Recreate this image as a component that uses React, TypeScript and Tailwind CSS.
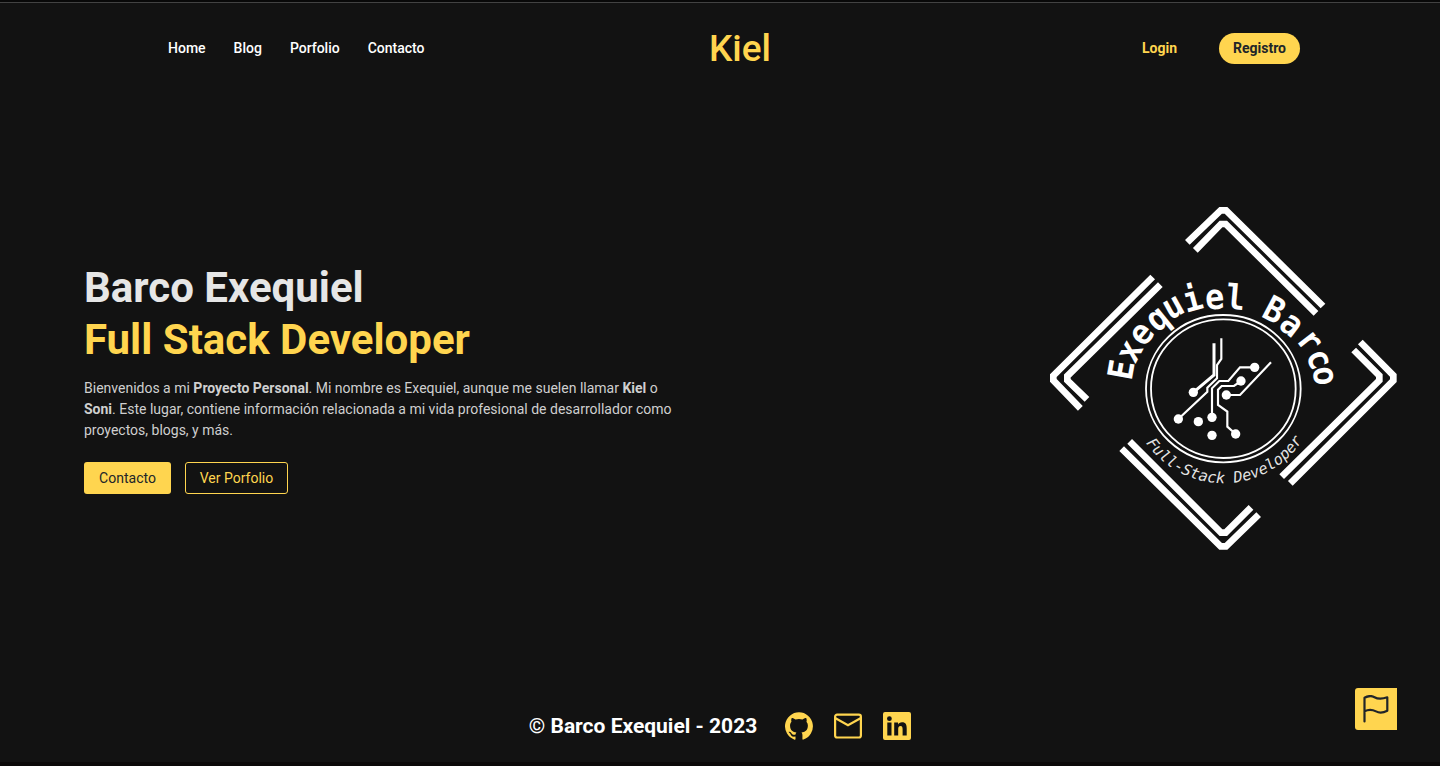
const navLinks = ["Home", "Blog", "Porfolio", "Contacto"];

const arcLetters: [string, number, number, number][] = [
  ["E", 242, 524, -80],
  ["x", 273, 470, -62],
  ["e", 307, 418, -50],
  ["q", 355, 374, -39],
  ["u", 401, 337, -29],
  ["i", 457, 309, -15],
  ["e", 524, 313, -5],
  ["l", 587, 305, 5],
  ["B", 704, 343, 28],
  ["a", 752, 391, 38],
  ["r", 806, 440, 52],
  ["c", 834, 494, 67],
  ["o", 850, 543, 82],
];

const nodes: [number, number][] = [
  [460, 592],
  [415, 672],
  [516, 667],
  [644, 517],
  [603, 558],
  [587, 717],
  [559, 600],
  [475, 680],
  [516, 721],
];

function Emblem() {
  return (
    <svg viewBox="30 30 1041 1041" className="size-[347px] shrink-0" fill="none" stroke="#fff">
      <g strokeWidth="20">
        <path d="M442 142 542 46H558L849 333M466 166 543 87H557L828 355" />
        <path d="M338 246 40 542V556L121 640M361 269 82 543V556L141 613" />
        <path d="M961 441 1060 541V557L751 865M941 465 1018 542V556L725 845" />
        <path d="M245 761 542 1054H558L656 959M269 739 543 1013H557L633 937" />
      </g>
      <g strokeWidth="5.5">
        <ellipse cx="550" cy="581" rx="232" ry="221" />
        <ellipse cx="550" cy="581" rx="217" ry="208" />
      </g>
      <g strokeWidth="6.5">
        <path strokeWidth="9" d="M522 445V540L460 592" />
        <path d="M544 430V492L531 510V550L502 578V590L415 672" />
        <path d="M516 667V580L538 558H565L600 517H644" />
        <path d="M603 558 582 573H545L534 584V630L562 650V695L587 717" />
        <path d="M559 600H600L693 502" />
      </g>
      <g fill="#fff" stroke="none">
        {nodes.map(([x, y]) => (
          <circle key={`${x}-${y}`} cx={x} cy={y} r="14" />
        ))}
        <g className="font-['DejaVu_Sans_Mono',monospace] text-[104px] font-bold" textAnchor="middle">
          {arcLetters.map(([c, x, y, r], i) => (
            <text key={i} transform={`translate(${x} ${y}) rotate(${r}) scale(0.92 1)`} y={/[EBli]/.test(c) ? 38 : 29}>
              {c}
            </text>
          ))}
        </g>
        <path id="tagline" d="M318 744A283 283 0 0 0 806 702" fill="none" />
        <text className="font-['DejaVu_Sans_Mono',monospace] text-[46px] italic" fillOpacity="0.9">
          <textPath href="#tagline">Full-Stack Developer</textPath>
        </text>
      </g>
    </svg>
  );
}

function GithubIcon() {
  return (
    <svg viewBox="0 0 24 24" className="size-7" fill="currentColor">
      <path d="M12 .3a12 12 0 0 0-3.8 23.38c.6.12.83-.26.83-.57L9 21.07c-3.34.72-4.04-1.61-4.04-1.61-.55-1.39-1.34-1.76-1.34-1.76-1.08-.74.09-.73.09-.73 1.2.09 1.83 1.24 1.83 1.24 1.08 1.83 2.81 1.3 3.5 1 .1-.78.42-1.31.76-1.61-2.67-.3-5.47-1.33-5.47-5.93 0-1.31.47-2.38 1.24-3.22-.14-.3-.54-1.52.1-3.18 0 0 1-.32 3.3 1.23a11.5 11.5 0 0 1 6 0c2.28-1.55 3.29-1.23 3.29-1.23.64 1.66.24 2.88.12 3.18a4.65 4.65 0 0 1 1.23 3.22c0 4.61-2.8 5.63-5.48 5.92.42.36.81 1.1.81 2.22l-.01 3.29c0 .31.2.69.82.57A12 12 0 0 0 12 .3" />
    </svg>
  );
}

function MailIcon() {
  return (
    <svg viewBox="0 0 28 28" className="size-7" fill="none" stroke="currentColor" strokeWidth="2.2">
      <rect x="1.1" y="2.7" width="25.8" height="22.8" rx="2" />
      <path d="M1.5 6.3 14 13.3 26.5 6.3" />
    </svg>
  );
}

function LinkedinIcon() {
  return (
    <svg viewBox="0 0 28 28" className="size-7" fill="currentColor">
      <path
        fillRule="evenodd"
        d="M2 0H26A2 2 0 0 1 28 2V26A2 2 0 0 1 26 28H2A2 2 0 0 1 0 26V2A2 2 0 0 1 2 0ZM4.3 10.6V23.4H8.5V10.6ZM6.4 4.3A2.4 2.4 0 1 0 6.4 9.1 2.4 2.4 0 1 0 6.4 4.3ZM11.2 10.6V23.4H15.2V17.1C15.2 15.4 15.6 13.9 17.5 13.9S19.6 15.7 19.6 17.2V23.4H23.7V16.4C23.7 13 23 10.3 19 10.3 17 10.3 15.7 11.3 15.1 12.4H15V10.6Z"
      />
    </svg>
  );
}

function FlagIcon() {
  return (
    <svg viewBox="0 0 28 28" className="size-7" fill="none" stroke="currentColor" strokeWidth="2.2" strokeLinecap="round" strokeLinejoin="round">
      <path d="M2.5 26.5V2.8C6 .8 9.3.3 12.5 2.2S20 4.2 25.3 2.3V15.7C21 18 17.5 18.3 14 16.4S7 14 2.5 16.2" />
    </svg>
  );
}

export default function App() {
  return (
    <div className="flex h-[766px] flex-col overflow-hidden border-t-2 border-b-4 border-t-[#080808] border-b-[#0b0909] bg-[#121212] font-[Roboto,sans-serif] text-sm">
      <header className="flex h-[91px] shrink-0 items-center border-t border-[#424242] pl-[168px] pr-[140px]">
        <nav className="flex flex-1 gap-7 font-medium text-white">
          {navLinks.map((l) => (
            <a key={l} href="#">{l}</a>
          ))}
        </nav>
        <a href="#" className="mr-[-6px] ml-1.5 text-[37px] leading-none font-medium text-[#ffd54f]">Kiel</a>
        <div className="flex flex-1 items-center justify-end gap-[42px] font-bold">
          <a href="#" className="text-[#ffd54f]">Login</a>
          <a href="#" className="flex h-[31px] items-center rounded-full bg-[#ffd54f] px-3.5 text-[#212529]">Registro</a>
        </div>
      </header>

      <main className="flex h-[571px] shrink-0 items-center justify-between pr-[43px] pl-[84px]">
        <section className="w-[600px] pb-0.5">
          <h1 className="text-[42px] leading-[52px] font-bold text-[#e6e6e6]">
            Barco Exequiel
            <span className="block text-[#ffd54f]">Full Stack Developer</span>
          </h1>
          <p className="mt-3 leading-[21px] text-[#cfcfcf]">
            Bienvenidos a mi <b>Proyecto Personal</b>. Mi nombre es Exequiel, aunque me suelen llamar <b>Kiel</b> o <b>Soni</b>. Este lugar, contiene información relacionada a mi vida profesional de desarrollador como proyectos, blogs, y más.
          </p>
          <div className="mt-[21px] flex gap-3.5">
            <button className="h-8 w-[87px] rounded-[3px] bg-[#ffd54f] text-[#212529]">Contacto</button>
            <button className="h-8 w-[103px] rounded-[3px] border border-[#ffd54f] text-[#ffd54f]">Ver Porfolio</button>
          </div>
        </section>
        <Emblem />
      </main>

      <footer className="grid flex-1 grid-cols-[1fr_auto_1fr] pt-6">
        <div className="col-start-2 flex items-start pt-6 text-[#ffd54f]">
          <p className="mr-7 text-[21px] leading-7 font-bold text-white">© Barco Exequiel - 2023</p>
          <div className="flex gap-[21px]">
            <GithubIcon />
            <MailIcon />
            <LinkedinIcon />
          </div>
        </div>
        <button className="mr-[43px] flex size-[42px] items-center justify-center justify-self-end rounded-l-[3px] bg-[#ffd54f] text-[#212529]">
          <FlagIcon />
        </button>
      </footer>
    </div>
  );
}
